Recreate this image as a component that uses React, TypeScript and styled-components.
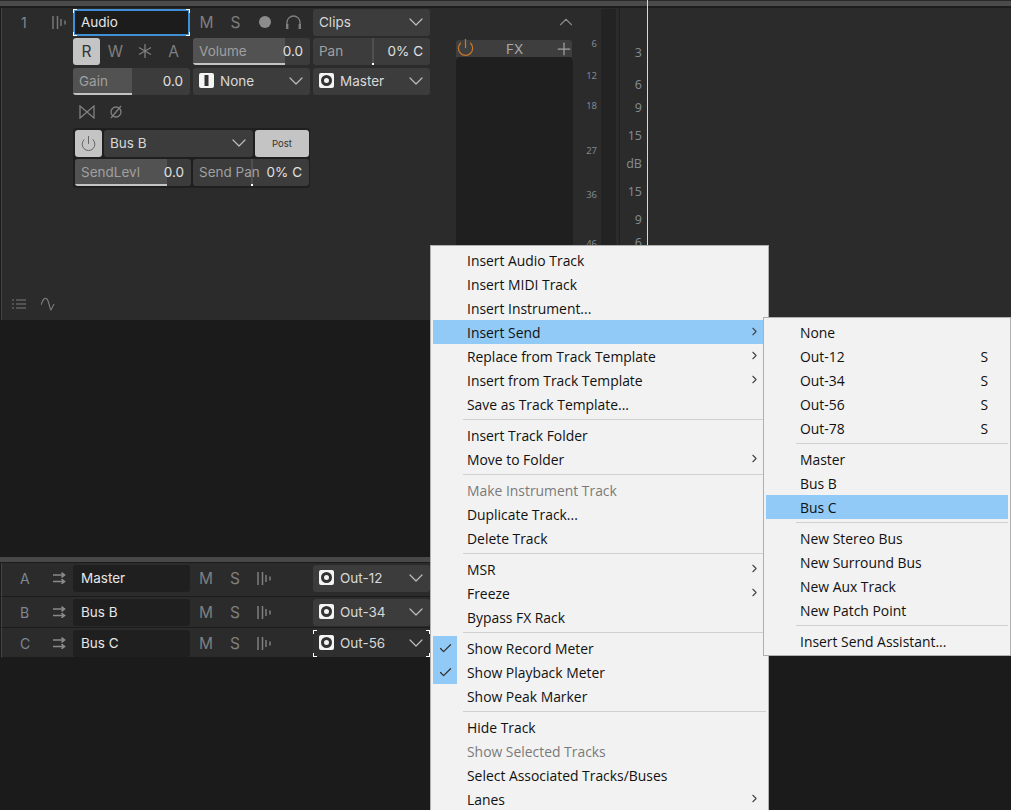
import styled, { createGlobalStyle, css } from 'styled-components'
import { ChevronDown, ChevronUp, ChevronRight, Check, Power, Plus } from 'lucide-react'

const GlobalStyle = createGlobalStyle`
  html, body {
    margin: 0;
    height: 100%;
    background: #1b1b1b;
    overflow: hidden;
  }
  * {
    box-sizing: border-box;
  }
`

// little white L shapes in the four corners of a focused control
const focusCorners = css`
  background-image: linear-gradient(#fff, #fff), linear-gradient(#fff, #fff), linear-gradient(#fff, #fff),
    linear-gradient(#fff, #fff), linear-gradient(#fff, #fff), linear-gradient(#fff, #fff),
    linear-gradient(#fff, #fff), linear-gradient(#fff, #fff);
  background-repeat: no-repeat;
  background-size: 4px 1px, 1px 4px, 4px 1px, 1px 4px, 4px 1px, 1px 4px, 4px 1px, 1px 4px;
  background-position: left top, left top, right top, right top, left bottom, left bottom, right bottom, right bottom;
`

const Page = styled.div`
  position: relative;
  width: 1011px;
  height: 810px;
  overflow: hidden;
  background: #1b1b1b;
  font-family: Inter, 'Liberation Sans', sans-serif;
  font-size: 13.5px;
  color: #b8b8b8;
`

const TopStrip = styled.div`
  height: 8px;
  background: #1d1d1d;
  border-top: 1px solid #2a2a2a;
  &::before {
    content: '';
    display: block;
    height: 5px;
    background: #4b4b4b;
  }
`

const TrackPanel = styled.section`
  height: 312px;
  margin-left: 1px;
  background: #2b2b2b;
  border-left: 1px solid #454545;
  display: flex;
  padding-top: 1px;
`

const LeftColumn = styled.div`
  width: 71px;
  display: flex;
  flex-direction: column;
  justify-content: space-between;
  padding-bottom: 9px;
`

const NumberRow = styled.div`
  height: 27px;
  display: flex;
  align-items: center;
  justify-content: space-between;
  padding: 0 7px 0 19px;
  font-size: 14px;
  color: #7b8794;
  svg {
    color: #777;
  }
`

const TrackIcons = styled.div`
  display: flex;
  align-items: center;
  gap: 15px;
  padding-left: 10px;
  color: #7d7d7d;
`

const Controls = styled.div`
  width: 357px;
  display: flex;
  flex-direction: column;
`

const ControlRow = styled.div<{ $gap?: number }>`
  height: 27px;
  margin-top: ${p => p.$gap ?? 0}px;
  display: grid;
  grid-template-columns: 117px 117px 117px;
  column-gap: 3px;
`

const Slot = styled.div`
  display: flex;
  align-items: center;
  gap: 2px;
`

const NameInput = styled.div`
  position: relative;
  border: 2px solid #3f8fd6;
  background: #1c1c1c;
  color: #e6e6e6;
  display: flex;
  align-items: center;
  padding: 0 0 2px 6px;
  &::after {
    content: '';
    position: absolute;
    inset: -2px;
    ${focusCorners}
  }
`

const FlagButton = styled.span<{ $on?: boolean }>`
  width: 27px;
  height: 27px;
  border-radius: 3px;
  display: flex;
  align-items: center;
  justify-content: center;
  font-size: 15.5px;
  padding-bottom: 1px;
  background: ${p => (p.$on ? '#c4c4c4' : 'transparent')};
  color: ${p => (p.$on ? '#333' : '#7f7f7f')};
`

const RecordDot = styled.i`
  width: 12px;
  height: 12px;
  border-radius: 50%;
  background: #8c8c8c;
`

const FaderBox = styled.div`
  position: relative;
  background: #3c3c3c;
  border-radius: 3px;
  display: flex;
  align-items: center;
  justify-content: space-between;
  padding: 0 7px 2px 6px;
  overflow: hidden;
  color: #e0e0e0;
`

const FaderFill = styled.i<{ $level: number }>`
  position: absolute;
  left: 0;
  top: 0;
  bottom: 0;
  width: ${p => p.$level}%;
  background: #525252;
  border-bottom: 2px solid #c4c4c4;
`

const PanMark = styled.i`
  position: absolute;
  top: 0;
  bottom: 0;
  left: 50%;
  width: 2px;
  background: #4f4f4f;
  &::after {
    content: '';
    position: absolute;
    left: 0;
    bottom: 0;
    width: 2px;
    height: 2px;
    background: #fff;
  }
`

const FaderLabel = styled.span`
  position: relative;
  color: #a0a0a0;
`

const FaderValue = styled.span`
  position: relative;
`

const Select = styled.div`
  background: #3c3c3c;
  border-radius: 3px;
  display: flex;
  align-items: center;
  padding: 0 2px 2px 6px;
  gap: 6px;
  color: #d8d8d8;
  > svg:last-child {
    margin-left: auto;
    color: #bdbdbd;
  }
`

const SmallIcons = styled.div`
  height: 27px;
  margin-top: 3px;
  display: flex;
  align-items: center;
  gap: 14px;
  padding-left: 6px;
  color: #808080;
`

const SendGroup = styled.div`
  width: 237px;
  height: 60px;
  margin-top: 3px;
  padding: 2px;
  border-radius: 3px;
  background: #1f1f1f;
  display: grid;
  grid-template-columns: 27px 149px 54px;
  grid-template-rows: 27px 27px;
  gap: 2px;
`

const SendPower = styled.span`
  background: #c4c4c4;
  border-radius: 3px;
  color: #555;
  display: flex;
  align-items: center;
  justify-content: center;
`

const PostButton = styled.span`
  background: #c4c4c4;
  border-radius: 3px;
  color: #333;
  font-size: 9.5px;
  display: flex;
  align-items: center;
  justify-content: center;
`

const SendFaders = styled.div`
  grid-column: 1 / span 3;
  display: grid;
  grid-template-columns: 116px 116px;
  gap: 2px;
`

const FxColumn = styled.div`
  width: 117px;
  margin-left: 26px;
  padding-top: 31px;
  position: relative;
  display: flex;
  flex-direction: column;
`

const CollapseButton = styled.span`
  position: absolute;
  top: 2px;
  right: -4px;
  color: #8a8a8a;
  display: flex;
`

const FxHead = styled.div`
  height: 17px;
  margin-right: 1px;
  background: #3e3e3e;
  border-radius: 3px 3px 0 0;
  display: flex;
  align-items: center;
  justify-content: space-between;
  color: #a8a8a8;
  svg:first-child {
    color: #c8772f;
    margin-top: -2px;
  }
  svg:last-child {
    color: #a0a0a0;
    margin-right: -2px;
  }
`

const FxBody = styled.div`
  height: 240px;
  background: #1f1f1f;
  border-radius: 5px 5px 0 0;
`

const ScaleColumn = styled.div<{ $width: number }>`
  width: ${p => p.$width}px;
  position: relative;
  color: #808890;
`

const Tick = styled.span<{ $y: number; $small?: boolean }>`
  position: absolute;
  right: ${p => (p.$small ? '4px' : '5px')};
  top: ${p => p.$y}px;
  font-family: 'Noto Sans', sans-serif;
  font-size: ${p => (p.$small ? '9.5px' : '12.5px')};
  line-height: 14px;
`

const MeterSlot = styled.div`
  width: 15px;
  height: 240px;
  background: #232323;
  border-radius: 3px;
`

const Divider = styled.div`
  width: 1px;
  margin-left: 3px;
  margin-top: -1px;
  background: #1f1f1f;
`

const Playhead = styled.div`
  position: absolute;
  top: 0;
  left: 647px;
  width: 1px;
  height: 246px;
  background: #d8d8d8;
`

const Gap = styled.div`
  height: 237px;
`

const BusSection = styled.section`
  border-top: 5px solid #484848;
  padding-top: 1px;
  width: 769px;
`

const BusRow = styled.div<{ $height: number }>`
  height: ${p => p.$height}px;
  margin-left: 1px;
  padding-top: 2px;
  border-left: 1px solid #454545;
  border-bottom: 1px solid #1b1b1b;
  background: #2b2b2b;
  display: flex;
  align-items: flex-start;
`

const BusLetter = styled.span`
  width: 50px;
  height: 27px;
  padding-left: 18px;
  display: flex;
  align-items: center;
  font-size: 14px;
  color: #7b8794;
`

const BusRoute = styled.span`
  width: 21px;
  height: 27px;
  padding-bottom: 2px;
  color: #8a8a8a;
  display: flex;
  align-items: center;
  justify-content: flex-start;
  padding-left: 1px;
`

const BusName = styled.div`
  width: 117px;
  height: 27px;
  background: #1f1f1f;
  border-radius: 3px;
  padding: 0 0 2px 8px;
  display: flex;
  align-items: center;
  color: #e6e6e6;
`

const BusFlag = styled.span<{ $width: number }>`
  width: ${p => p.$width}px;
  height: 27px;
  padding-bottom: 1px;
  font-size: 15.5px;
  color: #7f7f7f;
  display: flex;
  align-items: center;
  justify-content: center;
`

const BusSelect = styled(Select)<{ $focus?: boolean }>`
  width: 117px;
  height: 27px;
  margin-left: 33px;
  ${p =>
    p.$focus &&
    css`
      background-color: #2f2f2f;
      border-radius: 0;
      ${focusCorners}
    `}
`

const Menu = styled.div<{ $left: number; $top: number; $width: number; $height: number }>`
  position: absolute;
  left: ${p => p.$left}px;
  top: ${p => p.$top}px;
  width: ${p => p.$width}px;
  height: ${p => p.$height}px;
  background: #f2f2f2;
  border: 1px solid #b0b0b0;
  padding: 2px;
  font-family: 'Open Sans', 'Noto Sans', sans-serif;
  font-size: 13.9px;
  color: #111;
  overflow: hidden;
`

const Item = styled.div<{ $hl?: boolean; $off?: boolean }>`
  height: 24px;
  display: flex;
  align-items: center;
  position: relative;
  padding-left: 34px;
  background: ${p => (p.$hl ? '#91c9f7' : 'transparent')};
  color: ${p => (p.$off ? '#7a7a7a' : '#111')};
`

const ItemArrow = styled.span`
  position: absolute;
  right: 5px;
  top: 5px;
  color: #444;
  display: flex;
`

const CheckBox = styled.span`
  position: absolute;
  left: 0;
  top: 0;
  width: 24px;
  height: 24px;
  background: #91c9f7;
  color: #333;
  display: flex;
  align-items: center;
  justify-content: center;
`

const Shortcut = styled.span`
  position: absolute;
  right: 20px;
`

const Separator = styled.div`
  height: 1px;
  margin: 3px 0 3px 30px;
  background: #d0d0d0;
`

const Bars = () => (
  <svg width="14" height="13" viewBox="0 0 14 13" fill="none" stroke="currentColor" strokeWidth="1.5">
    <path d="M1 0v13M5.5 0v13M9 3v7M13 4.5v4" />
  </svg>
)

const RouteIcon = () => (
  <svg width="13" height="12" viewBox="0 0 13 12" fill="none" stroke="currentColor" strokeWidth="1.6">
    <path d="M0 3h11M8.5 .7L11.5 3L8.5 5.3M0 9.5h11M8.5 7.2L11.5 9.5L8.5 11.8" />
  </svg>
)

const OutBadge = () => (
  <svg width="15" height="15" viewBox="0 0 15 15">
    <rect width="15" height="15" rx="2" fill="#f4f4f4" />
    <circle cx="7.5" cy="7.5" r="4" fill="none" stroke="#333" strokeWidth="3" />
  </svg>
)

const MonoBadge = () => (
  <svg width="15" height="15" viewBox="0 0 15 15">
    <rect width="15" height="15" rx="2" fill="#f4f4f4" />
    <rect x="5.5" y="2" width="4" height="11" fill="#333" />
  </svg>
)

const Chevron = () => <ChevronDown size={24} strokeWidth={1.2} />

const Fader = ({ label, value, level }: { label: string; value: string; level?: number }) => (
  <FaderBox>
    {level !== undefined ? <FaderFill $level={level} /> : <PanMark />}
    <FaderLabel>{label}</FaderLabel>
    <FaderValue>{value}</FaderValue>
  </FaderBox>
)

type MenuRow = { label?: string; arrow?: boolean; hl?: boolean; off?: boolean; check?: boolean; key?: string }

const mainItems: MenuRow[] = [
  { label: 'Insert Audio Track' },
  { label: 'Insert MIDI Track' },
  { label: 'Insert Instrument...' },
  { label: 'Insert Send', arrow: true, hl: true },
  { label: 'Replace from Track Template', arrow: true },
  { label: 'Insert from Track Template', arrow: true },
  { label: 'Save as Track Template...' },
  {},
  { label: 'Insert Track Folder' },
  { label: 'Move to Folder', arrow: true },
  {},
  { label: 'Make Instrument Track', off: true },
  { label: 'Duplicate Track...' },
  { label: 'Delete Track' },
  {},
  { label: 'MSR', arrow: true },
  { label: 'Freeze', arrow: true },
  { label: 'Bypass FX Rack' },
  {},
  { label: 'Show Record Meter', check: true },
  { label: 'Show Playback Meter', check: true },
  { label: 'Show Peak Marker' },
  {},
  { label: 'Hide Track' },
  { label: 'Show Selected Tracks', off: true },
  { label: 'Select Associated Tracks/Buses' },
  { label: 'Lanes', arrow: true },
]

const subItems: MenuRow[] = [
  { label: 'None' },
  { label: 'Out-12', key: 'S' },
  { label: 'Out-34', key: 'S' },
  { label: 'Out-56', key: 'S' },
  { label: 'Out-78', key: 'S' },
  {},
  { label: 'Master' },
  { label: 'Bus B' },
  { label: 'Bus C', hl: true },
  {},
  { label: 'New Stereo Bus' },
  { label: 'New Surround Bus' },
  { label: 'New Aux Track' },
  { label: 'New Patch Point' },
  {},
  { label: 'Insert Send Assistant...' },
]

const MenuRows = ({ rows }: { rows: MenuRow[] }) => (
  <>
    {rows.map((row, i) =>
      row.label ? (
        <Item key={i} $hl={row.hl} $off={row.off}>
          {row.check && (
            <CheckBox>
              <Check size={15} />
            </CheckBox>
          )}
          {row.label}
          {row.key && <Shortcut>{row.key}</Shortcut>}
          {row.arrow && (
            <ItemArrow>
              <ChevronRight size={13} />
            </ItemArrow>
          )}
        </Item>
      ) : (
        <Separator key={i} />
      ),
    )}
  </>
)

const buses = [
  { letter: 'A', name: 'Master', out: 'Out-12', height: 34 },
  { letter: 'B', name: 'Bus B', out: 'Out-34', height: 31 },
  { letter: 'C', name: 'Bus C', out: 'Out-56', height: 30, focus: true },
]

const leftTicks = [
  ['6', 28],
  ['12', 60],
  ['18', 90],
  ['27', 135],
  ['36', 179],
  ['46', 228],
] as const

const rightTicks = [
  ['3', 37],
  ['6', 69],
  ['9', 92],
  ['15', 120],
  ['dB', 148],
  ['15', 176],
  ['9', 204],
  ['6', 227],
] as const

const App = () => (
  <Page>
    <GlobalStyle />
    <TopStrip />
    <TrackPanel>
      <LeftColumn>
        <NumberRow>
          <span>1</span>
          <Bars />
        </NumberRow>
        <TrackIcons>
          <svg width="14" height="12" viewBox="0 0 14 12" fill="none" stroke="currentColor" strokeWidth="1.2">
            <path d="M0 2h2M4 2h10M0 6h2M4 6h10M0 10h2M4 10h10" />
          </svg>
          <svg width="14" height="14" viewBox="0 0 14 14" fill="none" stroke="currentColor" strokeWidth="1.1">
            <path d="M0 8C2 2 4 0 6 2C8 4 9 13 10 13L13 7" />
          </svg>
        </TrackIcons>
      </LeftColumn>
      <Controls>
        <ControlRow>
          <NameInput>Audio</NameInput>
          <Slot>
            <FlagButton>M</FlagButton>
            <FlagButton>S</FlagButton>
            <FlagButton>
              <RecordDot />
            </FlagButton>
            <FlagButton>
              <svg width="15" height="14" viewBox="0 0 15 14" fill="none" stroke="currentColor" strokeWidth="1.3">
                <path d="M1 14V7.5a6.5 6.5 0 0 1 13 0V14" />
                <path d="M1.2 9v5M13.8 9v5" strokeWidth="2.4" />
              </svg>
            </FlagButton>
          </Slot>
          <Select>
            Clips
            <Chevron />
          </Select>
        </ControlRow>
        <ControlRow $gap={2}>
          <Slot>
            <FlagButton $on>R</FlagButton>
            <FlagButton>W</FlagButton>
            <FlagButton>
              <svg width="14" height="14" viewBox="0 0 14 14" fill="none" stroke="currentColor" strokeWidth="1.3">
                <path d="M7 0v14M1 3.5l12 7M13 3.5l-12 7" />
              </svg>
            </FlagButton>
            <FlagButton>A</FlagButton>
          </Slot>
          <Fader label="Volume" value="0.0" level={79} />
          <Fader label="Pan" value="0% C" />
        </ControlRow>
        <ControlRow $gap={3}>
          <Fader label="Gain" value="0.0" level={50} />
          <Select>
            <MonoBadge />
            None
            <Chevron />
          </Select>
          <Select>
            <OutBadge />
            Master
            <Chevron />
          </Select>
        </ControlRow>
        <SmallIcons>
          <svg width="16" height="14" viewBox="0 0 16 14" fill="none" stroke="currentColor" strokeWidth="1.3">
            <path d="M1 1v12l14-12v12z" />
          </svg>
          <svg width="14" height="14" viewBox="0 0 14 14" fill="none" stroke="currentColor" strokeWidth="1.3">
            <circle cx="7" cy="7" r="5" />
            <path d="M2 13L12 1" />
          </svg>
        </SmallIcons>
        <SendGroup>
          <SendPower>
            <Power size={17} strokeWidth={1.2} />
          </SendPower>
          <Select>
            Bus B
            <Chevron />
          </Select>
          <PostButton>Post</PostButton>
          <SendFaders>
            <Fader label="SendLevl" value="0.0" level={79} />
            <Fader label="Send Pan" value="0% C" />
          </SendFaders>
        </SendGroup>
      </Controls>
      <FxColumn>
        <CollapseButton>
          <ChevronUp size={22} strokeWidth={1.2} />
        </CollapseButton>
        <FxHead>
          <Power size={19} strokeWidth={1.6} />
          FX
          <Plus size={20} strokeWidth={1.5} />
        </FxHead>
        <FxBody />
      </FxColumn>
      <ScaleColumn $width={28}>
        {leftTicks.map(([t, y]) => (
          <Tick key={t} $y={y} $small>
            {t}
          </Tick>
        ))}
      </ScaleColumn>
      <MeterSlot />
      <Divider />
      <ScaleColumn $width={27}>
        {rightTicks.map(([t, y], i) => (
          <Tick key={i} $y={y}>
            {t}
          </Tick>
        ))}
      </ScaleColumn>
    </TrackPanel>
    <Gap />
    <BusSection>
      {buses.map(b => (
        <BusRow key={b.letter} $height={b.height}>
          <BusLetter>{b.letter}</BusLetter>
          <BusRoute>
            <RouteIcon />
          </BusRoute>
          <BusName>{b.name}</BusName>
          <BusFlag $width={32}>M</BusFlag>
          <BusFlag $width={26}>S</BusFlag>
          <BusFlag $width={32}>
            <Bars />
          </BusFlag>
          <BusSelect $focus={b.focus}>
            <OutBadge />
            {b.out}
            <Chevron />
          </BusSelect>
        </BusRow>
      ))}
    </BusSection>
    <Playhead />
    <Menu $left={430} $top={245} $width={339} $height={570}>
      <MenuRows rows={mainItems} />
    </Menu>
    <Menu $left={763} $top={317} $width={248} $height={339}>
      <MenuRows rows={subItems} />
    </Menu>
  </Page>
)

export default App
